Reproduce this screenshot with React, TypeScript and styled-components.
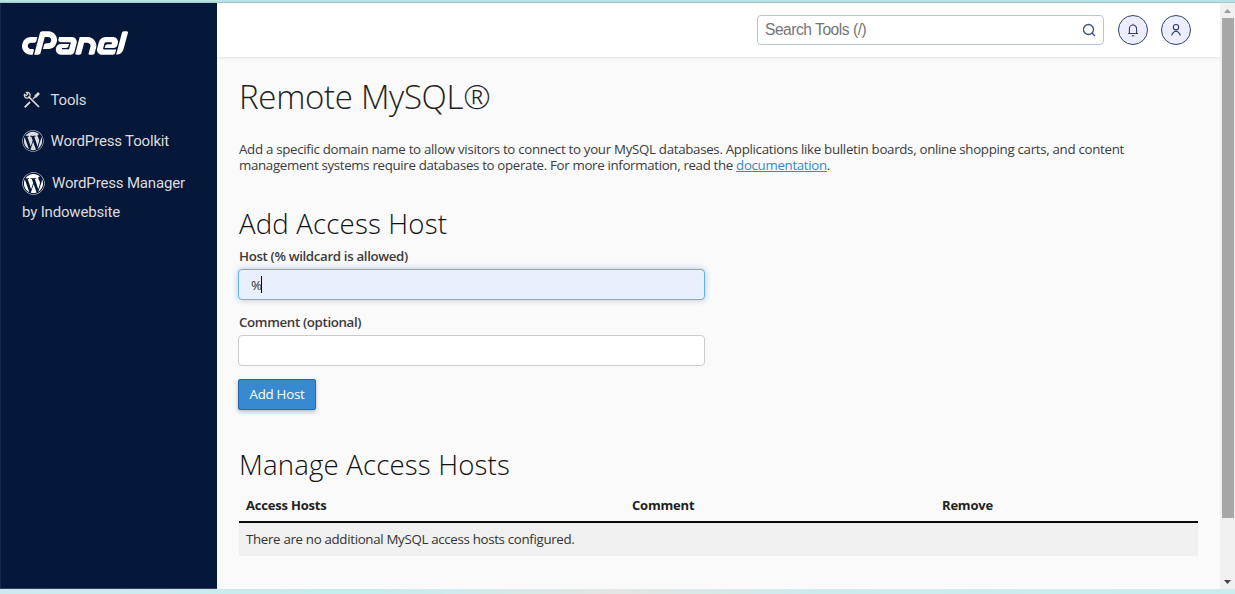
import React from 'react';
import styled, { createGlobalStyle } from 'styled-components';
import { SiCpanel } from 'react-icons/si';
import { FaWordpress } from 'react-icons/fa';

const GlobalStyle = createGlobalStyle`
  * { box-sizing: border-box; }
  body { margin: 0; background: #fafafa; font-family: "Open Sans", sans-serif; overflow: hidden; }
`;

const Frame = styled.div`
  width: 1235px;
  height: 594px;
  display: flex;
  flex-direction: column;
`;

const TopStrip = styled.div`
  height: 3px;
  flex: none;
  background: linear-gradient(#b9e2e4 0 2px, #a3c8c8 2px);
`;

const BottomStrip = styled.div`
  height: 5px;
  flex: none;
  background: linear-gradient(90deg, #cdeaee 0, #c5edee 30%, #d8e9e8 42%, #e3e6e4 50%, #cdebec 66%, #c8eef0 100%);
`;

const Shell = styled.div`
  flex: 1;
  display: flex;
  min-height: 0;
`;

const Sidebar = styled.aside`
  width: 217px;
  flex: none;
  background: #061839;
  border-left: 1px solid #182848;
  border-bottom: 1px solid #3a3a5c;
  padding: 26px 12px 0 21px;
`;

const Logo = styled.div`
  height: 27px;
  overflow: hidden;
  display: flex;
  align-items: center;
  color: #fff;
  svg { flex: none; }
`;

const NavItem = styled.a<{ $top: number; $gap: number }>`
  display: block;
  margin-top: ${(p) => p.$top}px;
  font: 400 15px/29px Roboto, sans-serif;
  letter-spacing: -0.17px;
  color: #dcdcdc;
  svg { vertical-align: middle; margin-right: ${(p) => p.$gap}px; position: relative; top: -1px; }
`;

const Main = styled.div`
  flex: 1;
  display: flex;
  flex-direction: column;
  min-width: 0;
`;

const Header = styled.header`
  height: 54px;
  flex: none;
  display: flex;
  align-items: center;
  justify-content: flex-end;
  padding-right: 29px;
  background: #fff;
  box-shadow: 0 1px 3px rgba(0, 0, 0, 0.1);
`;

const Search = styled.div`
  width: 347px;
  height: 30px;
  display: flex;
  align-items: center;
  justify-content: space-between;
  padding: 0 7px 0 7px;
  border: 1px solid #b9c3d8;
  border-radius: 4px;
  font: 400 15.6px/28px "Liberation Sans", sans-serif;
  letter-spacing: -0.48px;
  color: #757575;
`;

const RoundButton = styled.span<{ $left: number }>`
  width: 30px;
  height: 30px;
  margin-left: ${(p) => p.$left}px;
  display: flex;
  align-items: center;
  justify-content: center;
  border: 1.5px solid #33426b;
  border-radius: 50%;
  background: #ecedff;
`;

const Content = styled.main`
  padding: 17px 22px 0;
  color: #333;
`;

const PageTitle = styled.h1`
  margin: 0;
  font-size: 33px;
  line-height: 46px;
  font-weight: 300;
  letter-spacing: -0.3px;
  color: #222;
`;

const Intro = styled.p`
  margin: 21px 0 0;
  font-size: 13.3px;
  line-height: 16px;
  color: #3c3c3c;
  white-space: nowrap;
  a { color: #3a87c8; text-decoration: underline; }
`;

const IntroLine = styled.span<{ $spacing: number }>`
  display: block;
  letter-spacing: ${(p) => p.$spacing}px;
`;

const SectionTitle = styled.h2<{ $top: number }>`
  margin: ${(p) => p.$top}px 0 0;
  font-size: 27.6px;
  line-height: 36px;
  font-weight: 300;
  letter-spacing: 0.17px;
  color: #111;
`;

const Label = styled.label<{ $top: number }>`
  display: block;
  margin-top: ${(p) => p.$top}px;
  font-size: 13.3px;
  line-height: 18px;
  font-weight: 600;
  letter-spacing: -0.35px;
  color: #3a3a3a;
`;

const Field = styled.div<{ $focused?: boolean }>`
  width: 467px;
  height: 31px;
  margin: 4px 0 0 -1px;
  display: flex;
  align-items: center;
  padding: 0 12px;
  font-size: 13.3px;
  letter-spacing: -1px;
  border-radius: 4px;
  border: 1px solid ${(p) => (p.$focused ? '#66afe9' : '#ccc')};
  background: ${(p) => (p.$focused ? '#e8f0fe' : '#fff')};
  box-shadow: ${(p) => (p.$focused ? '0 0 6px rgba(102, 175, 233, 0.6)' : 'none')};
`;

const Caret = styled.i`
  width: 1px;
  height: 17px;
  background: #000;
`;

const Button = styled.button`
  display: block;
  width: 78px;
  height: 31px;
  margin: 13px 0 0 -1px;
  padding: 0 0 2px;
  border: 1px solid #2069ae;
  border-radius: 2px;
  background: #3789d0;
  color: #fff;
  font: 400 13.3px "Open Sans", sans-serif;
  letter-spacing: -0.25px;
  box-shadow: 0 2px 4px rgba(0, 0, 0, 0.25);
`;

const Table = styled.div`
  margin-top: 8px;
  width: 959px;
  font-size: 13.3px;
  letter-spacing: -0.32px;
`;

const HeadRow = styled.div`
  display: grid;
  grid-template-columns: 386px 310px 1fr;
  padding: 0 7px;
  height: 33px;
  line-height: 30px;
  font-size: 13px;
  letter-spacing: -0.2px;
  font-weight: 700;
  color: #222;
  border-bottom: 2px solid #0a0a0a;
`;

const Row = styled.div`
  height: 33px;
  padding: 0 7px;
  line-height: 33px;
  background: #f0f0f0;
`;

const Scrollbar = styled.div`
  width: 15px;
  flex: none;
  display: flex;
  flex-direction: column;
  justify-content: space-between;
  align-items: center;
  background: #f0f0f0;
`;

const Arrow = styled.div`
  height: 15px;
  display: flex;
  align-items: center;
`;

const Thumb = styled.div`
  width: 12px;
  height: 500px;
  margin-bottom: auto;
  background: #a7a7a7;
`;

const ToolsIcon = () => (
  <svg width="19" height="18" viewBox="-1 0 19 18" fill="none" stroke="#dcdcdc">
    <path d="M5.5 5.5 L16 16" strokeWidth="1.7" />
    <path d="M3.4 1.4 A2.9 2.9 0 1 1 1.4 3.4 L3.3 4.6 L4.7 3.2 Z" strokeWidth="1.2" />
    <path d="M1.7 16.3 L7 11" strokeWidth="1.8" />
    <path d="M10 8 L12.3 5.7" strokeWidth="1.2" />
    <path d="M12 6 L16 2" strokeWidth="2.6" />
  </svg>
);

export default function App() {
  return (
    <Frame>
      <GlobalStyle />
      <TopStrip />
      <Shell>
        <Sidebar>
          <Logo><SiCpanel size={106} /></Logo>
          <NavItem $top={30} $gap={9.5}><ToolsIcon />Tools</NavItem>
          <NavItem $top={12} $gap={6.5}><FaWordpress size={22} />WordPress Toolkit</NavItem>
          <NavItem $top={13} $gap={7}><FaWordpress size={23} color="#fff" />WordPress Manager<br />by Indowebsite</NavItem>
        </Sidebar>
        <Main>
          <Header>
            <Search>
              Search Tools (/)
              <svg width="14" height="14" viewBox="0 0 14 14" fill="none" stroke="#3b5084" strokeWidth="1.3">
                <circle cx="6.5" cy="6.5" r="5" />
                <path d="M10 10 L13 13" />
              </svg>
            </Search>
            <RoundButton $left={14}>
              <svg width="12" height="14" viewBox="0 0 12 14" fill="none" stroke="#33426b" strokeWidth="1.1">
                <path d="M1 10.5 H11 M2.4 10.5 V5.6 A3.6 3.6 0 0 1 9.6 5.6 V10.5 M6 2 V0.8 M4.7 12.7 H7.3" />
              </svg>
            </RoundButton>
            <RoundButton $left={13}>
              <svg width="12" height="14" viewBox="0 0 12 14" fill="none" stroke="#33426b" strokeWidth="1.1">
                <circle cx="6" cy="4.2" r="2.7" />
                <path d="M1.8 12.6 L2.2 10.8 L4.8 8.4 H7.2 L9.8 10.8 L10.2 12.6" />
              </svg>
            </RoundButton>
          </Header>
          <Content>
            <PageTitle>Remote MySQL®</PageTitle>
            <Intro>
              <IntroLine $spacing={-0.303}>Add a specific domain name to allow visitors to connect to your MySQL databases. Applications like bulletin boards, online shopping carts, and content</IntroLine>
              <IntroLine $spacing={-0.33}>management systems require databases to operate. For more information, read the <a>documentation</a>.</IntroLine>
            </Intro>
            <SectionTitle $top={32}>Add Access Host</SectionTitle>
            <Label $top={6}>Host (% wildcard is allowed)</Label>
            <Field $focused>%<Caret /></Field>
            <Label $top={13}>Comment (optional)</Label>
            <Field />
            <Button>Add Host</Button>
            <SectionTitle $top={36}>Manage Access Hosts</SectionTitle>
            <Table>
              <HeadRow><span>Access Hosts</span><span>Comment</span><span>Remove</span></HeadRow>
              <Row>There are no additional MySQL access hosts configured.</Row>
            </Table>
          </Content>
        </Main>
        <Scrollbar>
          <Arrow><svg width="7" height="4"><path d="M0 4 L3.5 0 L7 4Z" fill="#999" /></svg></Arrow>
          <Thumb />
          <Arrow><svg width="7" height="4"><path d="M0 0 L3.5 4 L7 0Z" fill="#444" /></svg></Arrow>
        </Scrollbar>
      </Shell>
      <BottomStrip />
    </Frame>
  );
}
